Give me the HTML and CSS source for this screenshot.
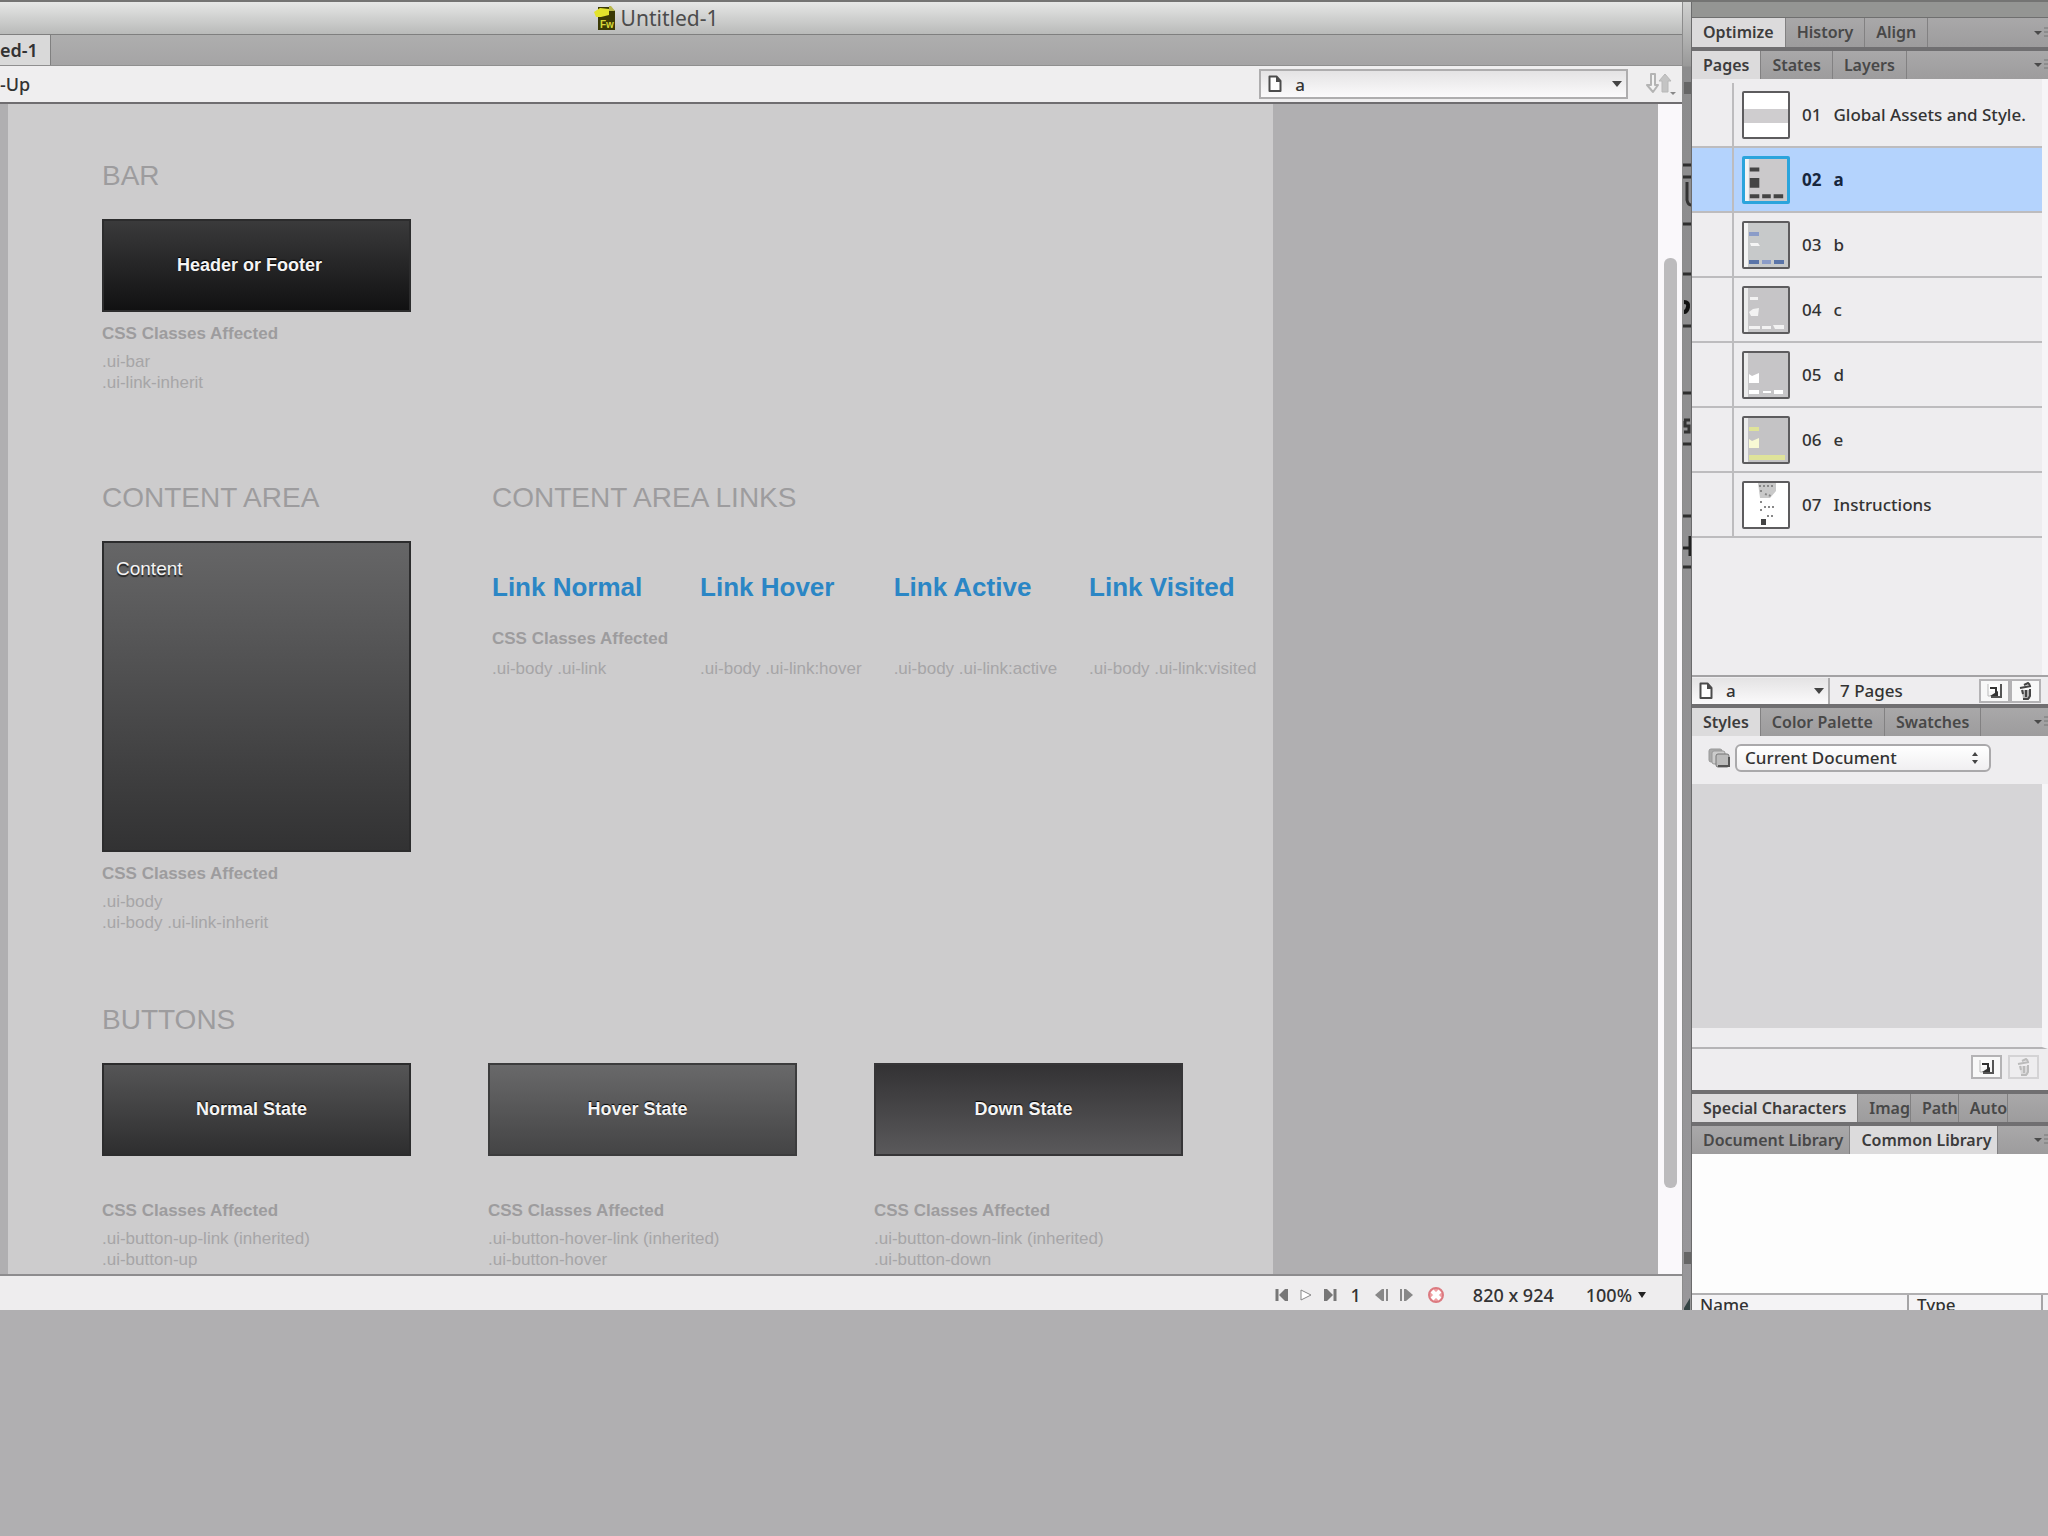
FILE: index.html
```html
<!DOCTYPE html>
<html lang="en">
<head>
    <meta charset="UTF-8">
    <meta name="viewport" content="width=device-width, initial-scale=1.0">
    <title>Untitled-1</title>
    <link rel="stylesheet" href="styles.css">
</head>
<body>
    <!-- Shared icons -->
    <svg class="defs" width="0" height="0" aria-hidden="true">
        <symbol id="icon-page" viewBox="0 0 14 18">
            <path d="M1.5 1.5h7l4 4.5v10h-11z" fill="#fff" stroke="#4c4c4c" stroke-width="2" stroke-linejoin="round"/>
            <path d="M8 1v6h5z" fill="#4c4c4c"/>
        </symbol>
        <symbol id="icon-new" viewBox="0 0 16 16">
            <path d="M1 1h10v7H1z" fill="#fff"/>
            <path d="M1 1v12h3" fill="none" stroke="#bbb" stroke-width="1"/>
            <path d="M14 1v13H4" fill="none" stroke="#555" stroke-width="2"/>
            <path d="M3 5h6v6" fill="none" stroke="#333" stroke-width="2"/>
            <path d="M3 13h8V8z" fill="#333"/>
        </symbol>
        <symbol id="icon-trash" viewBox="0 0 16 18">
            <path d="M2 6l11-2M6 3l4-2 2 2" fill="none" stroke="currentColor" stroke-width="2"/>
            <path d="M4 8h9l-1 9H5z" fill="currentColor" opacity="0.4"/>
            <path d="M12 7v7l-2 3H5M8 8v7M4 8l1 4" fill="none" stroke="currentColor" stroke-width="2"/>
        </symbol>
        <symbol id="icon-menu" viewBox="0 0 16 12">
            <path d="M0 4h8L4 8z" fill="#4a4a4a"/>
            <path d="M10 1h6M10 5h6M10 9h6" stroke="#777" stroke-width="1"/>
        </symbol>
    </svg>

    <div class="app">
        <main class="window">
            <header class="title-bar">
                <svg width="22" height="26" viewBox="0 0 22 26" aria-hidden="true">
                    <path d="M4 2h12l5 4v19H4z" fill="#3b3a05"/>
                    <path d="M15 1h2l4 5h-6z" fill="#b8b84a"/>
                    <path d="M0 7l6-4 9 1v6l-8 2H2z" fill="#e3e32c"/>
                    <text x="6" y="23" class="fw">Fw</text>
                </svg>
                <h1>Untitled-1</h1>
            </header>
            <div class="doc-tabs" role="tablist">
                <button type="button" class="doc-tab" role="tab" aria-selected="true">ed-1</button>
            </div>
            <div class="toolbar">
                <button type="button" class="view-button">-Up</button>
                <div class="page-select">
                    <label for="page-top" aria-label="Page"><svg width="14" height="18"><use href="#icon-page"/></svg></label>
                    <select id="page-top"><option>a</option><option>b</option><option>c</option></select>
                    <svg class="arrow" width="10" height="8" viewBox="0 0 10 8" aria-hidden="true"><path d="M0 1h10L5 7z" fill="#444"/></svg>
                </div>
                <button type="button" class="sync-button" aria-label="File management">
                    <svg width="30" height="24" viewBox="0 0 30 24">
                        <path d="M5 2h4v11h3l-5 7-6-7h4z" fill="#f3f3f3" stroke="#b4b4b4" stroke-width="2" stroke-linejoin="round"/>
                        <path d="M16 20V9h-3l6-7 6 7h-3v11z" fill="#c4c4c4" stroke="#b8b8b8" stroke-width="1"/>
                        <path d="M24 20h6l-3 3z" fill="#888"/>
                    </svg>
                </button>
            </div>

            <div class="canvas">
                <div class="artboard">
                    <section class="swatch-section">
                        <div class="block">
                            <h2>BAR</h2>
                            <div class="swatch bar">Header or Footer</div>
                            <h3>CSS Classes Affected</h3>
                            <p>.ui-bar<br>.ui-link-inherit</p>
                        </div>
                    </section>
                    <section class="swatch-section content-section">
                        <div class="block">
                            <h2>CONTENT AREA</h2>
                            <div class="swatch content">Content</div>
                            <h3>CSS Classes Affected</h3>
                            <p>.ui-body<br>.ui-body .ui-link-inherit</p>
                        </div>
                        <div class="links-block">
                            <h2>CONTENT AREA LINKS</h2>
                            <div class="links">
                                <div class="link-item">
                                    <a href="#normal">Link Normal</a>
                                    <h3>CSS Classes Affected</h3>
                                    <p>.ui-body .ui-link</p>
                                </div>
                                <div class="link-item">
                                    <a href="#hover">Link Hover</a>
                                    <p>.ui-body .ui-link:hover</p>
                                </div>
                                <div class="link-item">
                                    <a href="#active">Link Active</a>
                                    <p>.ui-body .ui-link:active</p>
                                </div>
                                <div class="link-item">
                                    <a href="#visited">Link Visited</a>
                                    <p>.ui-body .ui-link:visited</p>
                                </div>
                            </div>
                        </div>
                    </section>
                    <section class="buttons-section">
                        <h2>BUTTONS</h2>
                        <div class="swatch-section">
                            <div class="block">
                                <button type="button" class="swatch normal">Normal State</button>
                                <h3>CSS Classes Affected</h3>
                                <p>.ui-button-up-link (inherited)<br>.ui-button-up</p>
                            </div>
                            <div class="block">
                                <button type="button" class="swatch hover">Hover State</button>
                                <h3>CSS Classes Affected</h3>
                                <p>.ui-button-hover-link (inherited)<br>.ui-button-hover</p>
                            </div>
                            <div class="block">
                                <button type="button" class="swatch down">Down State</button>
                                <h3>CSS Classes Affected</h3>
                                <p>.ui-button-down-link (inherited)<br>.ui-button-down</p>
                            </div>
                        </div>
                    </section>
                </div>
                <div class="scrollbar"><div class="thumb"></div></div>
            </div>

            <footer class="status-bar">
                <button type="button" aria-label="First state"><svg width="14" height="12" viewBox="0 0 14 12"><path d="M2 0v12" stroke="#777" stroke-width="3"/><path d="M13 0v12h-3L4 6l6-6z" fill="#777"/></svg></button>
                <button type="button" aria-label="Play"><svg width="14" height="12" viewBox="0 0 14 12"><path d="M2 1v10l10-5z" fill="#fff" stroke="#888" stroke-width="1"/></svg></button>
                <button type="button" aria-label="Last state"><svg width="14" height="12" viewBox="0 0 14 12"><path d="M12 0v12" stroke="#777" stroke-width="3"/><path d="M1 0v12h3l6-6-6-6z" fill="#777"/></svg></button>
                <span class="state-number">1</span>
                <button type="button" aria-label="Previous state"><svg width="14" height="12" viewBox="0 0 14 12"><path d="M7 0v12L0 6z" fill="#888"/><path d="M8 0v12M12 0v12" stroke="#888" stroke-width="2"/></svg></button>
                <button type="button" aria-label="Next state"><svg width="14" height="12" viewBox="0 0 14 12"><path d="M7 0v12l7-6z" fill="#888"/><path d="M2 0v12M6 0v12" stroke="#888" stroke-width="2"/></svg></button>
                <button type="button" class="stop" aria-label="Stop"><svg width="18" height="18" viewBox="0 0 18 18"><circle cx="9" cy="9" r="7" fill="#f0a0a4" stroke="#dc7a80" stroke-width="2"/><path d="M5 5l8 8M13 5l-8 8" stroke="#fff" stroke-width="4"/></svg></button>
                <span class="doc-size">820 x 924</span>
                <button type="button" class="zoom">100% <svg width="8" height="6" viewBox="0 0 8 6"><path d="M0 0h8L4 6z" fill="#222"/></svg></button>
            </footer>
        </main>

        <!-- Strip of the window behind, seen between canvas and panels -->
        <div class="gutter">
            <svg width="9" height="1308" viewBox="0 2 9 1308" aria-hidden="true">
                <path d="M1 82h7v12H1zM1 1252h7v12H1z" fill="#666"/>
                <path d="M0 165h8M0 177h8M0 224h8M0 274h8M0 326h8M0 393h8M0 444h8M0 516h8M0 567h8" stroke="#2e2e2e" stroke-width="3"/>
                <path d="M4 182v18q1 5 4 5" fill="none" stroke="#333" stroke-width="3"/>
                <path d="M1 302q5 0 4 5t-4 5" fill="none" stroke="#111" stroke-width="4"/>
                <path d="M1 420h6M2 421v5h4v6H1" fill="none" stroke="#333" stroke-width="3"/>
                <path d="M7 536v20M0 548h8" fill="none" stroke="#222" stroke-width="3"/>
                <path d="M1 1308l6-10v12H1z" fill="#354545"/>
            </svg>
        </div>

        <aside class="panels">
            <div class="panel-top"></div>
            <div class="tabs" role="tablist">
                <button type="button" role="tab" class="tab active">Optimize</button>
                <button type="button" role="tab" class="tab">History</button>
                <button type="button" role="tab" class="tab">Align</button>
                <button type="button" class="menu" aria-label="Panel menu"><svg width="16" height="12"><use href="#icon-menu"/></svg></button>
            </div>
            <div class="tabs" role="tablist">
                <button type="button" role="tab" class="tab active">Pages</button>
                <button type="button" role="tab" class="tab">States</button>
                <button type="button" role="tab" class="tab">Layers</button>
                <button type="button" class="menu" aria-label="Panel menu"><svg width="16" height="12"><use href="#icon-menu"/></svg></button>
            </div>
            <ul class="pages">
                <li>
                    <svg class="preview" viewBox="0 0 44 44"><path fill="#fff" d="M0 0h44v44H0z"/><path fill="#cfcdcf" d="M0 16h44v14H0z"/></svg>
                    <span>01</span><span>Global Assets and Style.</span>
                </li>
                <li class="selected">
                    <svg class="preview" viewBox="0 0 44 44"><path fill="#cbc9cb" d="M0 0h44v44H0z"/><path fill="#f4f4f4" d="M0 0h4v44H0z"/><path fill="#444" d="M5 9h10v4H5zM5 20h10v10H5zM5 37h10v4H5zM18 37h9v4h-9zM30 37h10v4H30z"/></svg>
                    <span>02</span><span>a</span>
                </li>
                <li>
                    <svg class="preview" viewBox="0 0 44 44"><path fill="#c7c9ca" d="M0 0h44v44H0z"/><path fill="#f4f4f4" d="M0 0h4v44H0z"/><path fill="#8b9cc8" d="M5 9h10v4H5zM18 37h9v4h-9z"/><path fill="#f5f5f5" d="M6 20h8l2 3H7z"/><path fill="#5a74a8" d="M5 37h10v4H5zM30 37h10v4H30z"/></svg>
                    <span>03</span><span>b</span>
                </li>
                <li>
                    <svg class="preview" viewBox="0 0 44 44"><path fill="#c6c5c7" d="M0 0h44v44H0z"/><path fill="#ececec" d="M0 0h4v44H0z"/><path fill="#f2f2f2" d="M6 9h8v3H6zM5 24l4-3 6-1-1 8H7zM5 38h11v3H5zM18 38h9v3h-9zM29 37h11v4H31z"/></svg>
                    <span>04</span><span>c</span>
                </li>
                <li>
                    <svg class="preview" viewBox="0 0 44 44"><path fill="#c6c5c7" d="M0 0h44v44H0z"/><path fill="#ececec" d="M0 0h4v44H0z"/><path fill="#fff" d="M5 21l3 2 7-3v10H5zM5 37h10v4H5zM19 38h8v2h-8zM30 37h9v4h-9z"/></svg>
                    <span>05</span><span>d</span>
                </li>
                <li>
                    <svg class="preview" viewBox="0 0 44 44"><path fill="#c4c3c5" d="M0 0h44v44H0z"/><path fill="#ececec" d="M0 0h4v44H0z"/><path fill="#dfe39a" d="M5 9h10v4H5zM5 37h36v5H5z"/><path fill="#f8f9d4" d="M5 21l3 2 7-3v10H5z"/></svg>
                    <span>06</span><span>e</span>
                </li>
                <li>
                    <svg class="preview" viewBox="0 0 44 44"><path fill="#fff" d="M0 0h44v44H0z"/><path fill="#c9c9c9" d="M14 0h18v8l-6 7H16z"/><path fill="none" stroke="#888" stroke-width="2" stroke-dasharray="2 2" d="M15 3h14M16 8h2M16 19h2M16 27h2M20 24h10M23 33h7M21 11l6 2"/><path fill="#444" d="M17 36h5v6h-5z"/></svg>
                    <span>07</span><span>Instructions</span>
                </li>
            </ul>
            <div class="pages-bar">
                <div class="page-select">
                    <label for="page-bottom" aria-label="Current page"><svg width="14" height="18"><use href="#icon-page"/></svg></label>
                    <select id="page-bottom"><option>a</option><option>b</option><option>c</option></select>
                    <svg class="arrow" width="10" height="8" viewBox="0 0 10 8" aria-hidden="true"><path d="M0 1h10L5 7z" fill="#444"/></svg>
                </div>
                <span class="count">7 Pages</span>
                <button type="button" class="icon-button" aria-label="New page"><svg width="16" height="16"><use href="#icon-new"/></svg></button>
                <button type="button" class="icon-button" aria-label="Delete page"><svg width="16" height="18"><use href="#icon-trash"/></svg></button>
            </div>

            <div class="tabs" role="tablist">
                <button type="button" role="tab" class="tab active">Styles</button>
                <button type="button" role="tab" class="tab">Color Palette</button>
                <button type="button" role="tab" class="tab">Swatches</button>
                <button type="button" class="menu" aria-label="Panel menu"><svg width="16" height="12"><use href="#icon-menu"/></svg></button>
            </div>
            <div class="styles-head">
                <label for="style-set" aria-label="Style set">
                    <svg width="22" height="20" viewBox="0 0 22 20"><rect x="1" y="1" width="13" height="13" rx="2" fill="#aaa" stroke="#999"/><rect x="4" y="3" width="13" height="13" rx="2" fill="#ccc" stroke="#999"/><rect x="8" y="6" width="13" height="13" rx="2" fill="#bbb" stroke="#777"/><path d="M10 18h11v-9" fill="none" stroke="#555" stroke-width="2"/></svg>
                </label>
                <div class="style-select">
                    <select id="style-set"><option>Current Document</option></select>
                    <svg width="8" height="14" viewBox="0 0 8 14" aria-hidden="true"><path d="M1 5l3-4 3 4zM1 9l3 4 3-4z" fill="#444"/></svg>
                </div>
            </div>
            <div class="styles-list"></div>
            <div class="styles-bar">
                <button type="button" class="icon-button" aria-label="New style"><svg width="16" height="16"><use href="#icon-new"/></svg></button>
                <button type="button" class="icon-button" aria-label="Delete style" disabled><svg width="16" height="18"><use href="#icon-trash"/></svg></button>
            </div>

            <div class="tabs" role="tablist">
                <button type="button" role="tab" class="tab active">Special Characters</button>
                <button type="button" role="tab" class="tab cut">Imag</button>
                <button type="button" role="tab" class="tab cut">Path</button>
                <button type="button" role="tab" class="tab cut">Auto</button>
            </div>
            <div class="tabs" role="tablist">
                <button type="button" role="tab" class="tab tight">Document Library</button>
                <button type="button" role="tab" class="tab tight active">Common Library</button>
                <button type="button" class="menu" aria-label="Panel menu"><svg width="16" height="12"><use href="#icon-menu"/></svg></button>
            </div>
            <div class="library"></div>
            <div class="library-head">
                <table>
                    <thead>
                        <tr><th class="col-name">Name</th><th>Type</th><th class="col-last"></th></tr>
                    </thead>
                </table>
            </div>
        </aside>
    </div>
</body>
</html>
```
FILE: styles.css
```css
* {
    box-sizing: border-box;
}
body {
    margin: 0;
    background-color: #b0afb1;
    font-family: "Noto Sans", "Open Sans", sans-serif;
    font-size: 17px;
    color: #333333;
}
button, select {
    font: inherit;
    color: inherit;
    border: none;
    border-radius: 0;
    background: none;
    padding: 0;
    margin: 0;
}
h1, h2, h3, p, ul {
    margin: 0;
    padding: 0;
}
svg {
    display: block;
    flex: none;
}
.defs {
    position: absolute;
}
.app {
    display: flex;
    overflow: hidden;
    border-top: 2px solid #747473;
}

/* Document window */
.window {
    flex: 1;
    min-width: 0;
    border-right: 1px solid #8c8c8c;
}
.title-bar {
    display: flex;
    justify-content: center;
    align-items: center;
    gap: 5px;
    height: 33px;
    padding-right: 370px;
    background: linear-gradient(#e6e7e6, #b9bab9);
    border-bottom: 1px solid #7f7f7f;
}
.title-bar h1 {
    font-size: 21px;
    line-height: 30px;
    font-weight: 400;
    color: #4c4c4c;
}
.fw {
    font: bold 10px "Liberation Sans", sans-serif;
    fill: #d8d83a;
}
.doc-tabs {
    display: flex;
    height: 31px;
    background: linear-gradient(#aeaeae, #a5a4a5);
    border-bottom: 1px solid #8f8f8f;
}
.doc-tab {
    padding-right: 12px;
    background-color: #d9d9d9;
    border-right: 1px solid #808080;
    font-size: 18px;
    font-weight: 600;
}
.toolbar {
    display: flex;
    align-items: center;
    height: 38px;
    padding-right: 6px;
    background-color: #efeeef;
    border-bottom: 2px solid #6f6d70;
}
.view-button {
    margin-right: auto;
    font-size: 18px;
    font-weight: 500;
}
.page-select {
    display: flex;
    align-items: center;
    position: relative;
    height: 30px;
    padding-left: 7px;
    border: 2px solid #aeadae;
    background: linear-gradient(#e4e3e4, #fbfafb);
}
.page-select select {
    flex: 1;
    align-self: stretch;
    appearance: none;
    padding-left: 13px;
    font-weight: 500;
}
.arrow {
    position: absolute;
    right: 4px;
    pointer-events: none;
}
.toolbar .page-select {
    width: 22%;
    margin-right: 18px;
}

/* Canvas */
.canvas {
    display: flex;
    padding-left: 8px;
    border-bottom: 2px solid #8d8c8e;
    font-family: "Liberation Sans", Arial, sans-serif;
    color: #9d9c9e;
}
.artboard {
    flex: 0 1 1265px;
    padding: 56px 12px 4px 94px;
    background-color: #cdcccd;
}
.scrollbar {
    width: 24px;
    margin-left: auto;
    padding: 154px 5px 86px 6px;
    background-color: #faf8fb;
}
.thumb {
    height: 100%;
    border-radius: 6px;
    background-color: #bcbbbd;
}
.artboard h2 {
    font-size: 28px;
    line-height: 32px;
    font-weight: 400;
    margin-bottom: 27px;
}
.artboard h3 {
    font-size: 17px;
    line-height: 24px;
    margin: 10px 0 5px;
}
.artboard p {
    font-size: 17px;
    line-height: 21px;
    color: #a6a5a7;
}
.swatch-section {
    display: flex;
    gap: 77px;
}
.content-section {
    margin: 89px 0 71px;
}
.block {
    width: 309px;
}
.swatch {
    display: flex;
    align-items: center;
    justify-content: center;
    width: 100%;
    height: 93px;
    border: 2px solid #2c2c2d;
    font-size: 19px;
    font-weight: 700;
    color: #f4f4f4;
    text-shadow: 0 -1px 1px #000000;
}
.bar {
    background: linear-gradient(#3a3a3b, #111112);
    padding-right: 14px;
}
.content {
    height: 311px;
    align-items: flex-start;
    justify-content: flex-start;
    padding: 15px 12px;
    background: linear-gradient(#666667, #323233);
    font-weight: 400;
    text-shadow: 0 2px 1px #222222;
}
.normal, .hover, .down {
    padding-right: 10px;
}
.normal {
    background: linear-gradient(#555556, #2e2e2f);
}
.hover {
    background: linear-gradient(#69696a, #444445);
    border-color: #3c3c3d;
}
.down {
    background: linear-gradient(#333234, #5a595b);
    border-color: #363537;
}
.bar, .normal, .hover, .down {
    font-size: 18px;
}
.buttons-section h3 {
    margin-top: 43px;
}
.links-block {
    flex: 1;
    padding-left: 4px;
}
.links {
    display: flex;
    gap: 32px;
    padding-top: 30px;
}
.link-item {
    display: flex;
    flex-direction: column;
    height: 108px;
    white-space: nowrap;
}
.link-item a {
    font-size: 26px;
    line-height: 32px;
    font-weight: 700;
    color: #2b86c5;
    text-decoration: none;
}
.link-item h3 {
    margin: 24px 0 0;
}
.link-item p {
    margin-top: auto;
}

/* Status bar */
.status-bar {
    display: flex;
    align-items: center;
    justify-content: flex-end;
    gap: 10px;
    height: 34px;
    padding: 4px 36px 0 0;
    background-color: #eeedee;
    font-size: 18px;
    font-weight: 500;
}
.state-number {
    padding: 0 4px;
}
.stop {
    padding: 0 18px 0 4px;
}
.zoom {
    display: flex;
    align-items: center;
    gap: 6px;
    margin-left: 22px;
}

.gutter {
    width: 9px;
    height: 1308px;
    overflow: hidden;
    background: linear-gradient(#d0d1d0, #999999 64px, #8c8c8d 65px, #98979a);
    border-right: 1px solid #6b6b6c;
}

/* Side panels */
.panels {
    display: flex;
    flex-direction: column;
    width: 356px;
    height: 1308px;
    background-color: #eeedef;
    overflow: hidden;
}
.panel-top {
    height: 16px;
    background-color: #949593;
    border-bottom: 1px solid #6f6f6f;
}
.tabs {
    display: flex;
    flex: none;
    height: 29px;
    background: linear-gradient(#a9a8a9, #9d9c9d);
}
.tab {
    padding: 0 11px 1px;
    border-right: 1px solid #828182;
    font-size: 16px;
    font-weight: 600;
    color: #484848;
    white-space: nowrap;
}
.tab.active {
    background-color: #dcdbdc;
    color: #3c3c3c;
}
.tab.cut {
    padding-right: 0;
}
.tab.tight {
    padding-right: 6px;
}
.tabs .menu {
    margin-left: auto;
    width: 14px;
    overflow: hidden;
}
.tabs + .tabs, .pages-bar + .tabs, .styles-bar + .tabs {
    height: 32px;
    border-top: 4px solid #706f71;
}
.pages {
    list-style: none;
    height: 596px;
    padding-top: 4px;
    border-right: 6px solid #f6f5f7;
}
.pages li {
    display: flex;
    align-items: center;
    gap: 12px;
    height: 65px;
    border-bottom: 2px solid #bdbcbe;
    font-size: 17px;
    font-weight: 500;
    white-space: nowrap;
    background: linear-gradient(#bdbcbe, #bdbcbe) 40px 0 / 2px 100% no-repeat;
}
.pages li.selected {
    background-color: #b4d3fd;
    font-weight: 700;
    color: #17263c;
}
.preview {
    width: 48px;
    height: 48px;
    margin-left: 50px;
    border: 2px solid #5d5c5e;
    border-radius: 2px;
}
.selected .preview {
    border: 3px solid #2ba4dc;
}
.pages-bar {
    display: flex;
    align-items: center;
    height: 29px;
    padding-right: 7px;
    border-top: 2px solid #a3a2a4;
}
.pages-bar .page-select {
    width: 138px;
    height: 26px;
    border-width: 0 2px 0 0;
}
.count {
    margin: 0 auto 0 10px;
    font-weight: 500;
}
.icon-button {
    display: flex;
    align-items: center;
    justify-content: center;
    width: 31px;
    height: 24px;
    border: 2px solid #b4b3b5;
    background-color: #f8f8f8;
    color: #444444;
}
.icon-button:disabled {
    border-color: #d4d3d5;
    background-color: #eeedef;
    color: #bbbbbb;
}
.styles-head {
    display: flex;
    align-items: center;
    gap: 5px;
    height: 48px;
    padding: 0 57px 5px 16px;
}
.style-select {
    display: flex;
    align-items: center;
    flex: 1;
    height: 28px;
    padding-right: 10px;
    border: 2px solid #aaa9ab;
    border-radius: 6px;
    background: linear-gradient(#ffffff, #f0eff1);
}
.style-select select {
    flex: 1;
    appearance: none;
    padding-left: 8px;
    font-weight: 500;
}
.styles-list {
    height: 265px;
    border-right: 6px solid #f6f5f7;
    border-bottom: 2px solid #b5b4b6;
    background: linear-gradient(#d6d5d7 244px, #eeedef 244px);
}
.styles-bar {
    display: flex;
    align-items: center;
    justify-content: flex-end;
    gap: 6px;
    height: 41px;
    padding: 0 9px 5px 0;
}
.library {
    flex: 1;
    background-color: #fdfdfd;
}
.library-head {
    height: 17px;
    overflow: hidden;
    border-top: 2px solid #b0afb1;
    background-color: #f4f3f5;
}
.library-head table {
    width: 100%;
    border-collapse: collapse;
}
.library-head th {
    padding: 0 8px;
    border-right: 2px solid #a5a4a6;
    text-align: left;
    line-height: 20px;
    font-weight: 500;
}
.library-head .col-name {
    width: 216px;
}
.library-head .col-last {
    width: 6px;
    padding: 0;
    border-right: none;
}
```
